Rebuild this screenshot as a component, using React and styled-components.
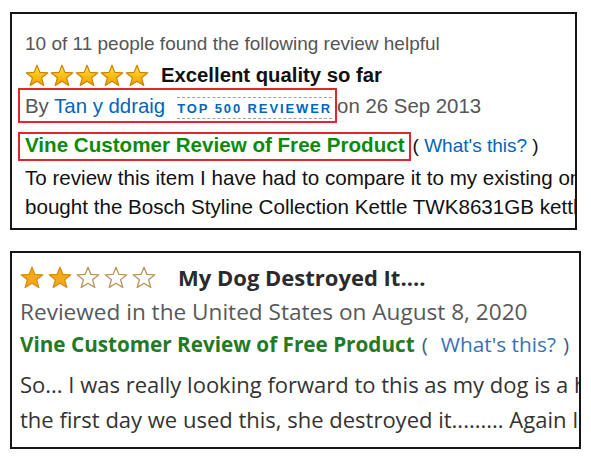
import React, { useId } from "react";
import styled, { createGlobalStyle } from "styled-components";

const GlobalStyle = createGlobalStyle`
  html, body { margin: 0; padding: 0; background: #fff; }
`;

const Page = styled.main`
  display: flex;
  flex-direction: column;
  align-items: flex-start;
  gap: 21px;
  padding: 12px 0 0 10px;
`;

const Panel = styled.section`
  box-sizing: border-box;
  width: ${(p) => p.$w}px;
  height: ${(p) => p.$h}px;
  border: 2px solid #151515;
  overflow: hidden;
  background: #fff;
`;

const ClassicContent = styled.div`
  padding: 19px 0 0 13px;
  font-family: "Liberation Sans", Arial, sans-serif;
  color: #111;
`;

const ModernContent = styled.div`
  padding: 11px 0 0 8px;
  font-family: "Open Sans", "Noto Sans", sans-serif;
  color: #333;
`;

const Helpful = styled.div`
  font-size: 19px;
  line-height: 22px;
  color: #555;
  white-space: nowrap;
`;

const TitleRow = styled.div`
  display: flex;
  align-items: center;
  gap: ${(p) => p.$gap}px;
  height: ${(p) => p.$h}px;
  margin-top: ${(p) => p.$mt || 0}px;
  white-space: nowrap;
`;

const StarList = styled.div`
  display: flex;
  gap: ${(p) => p.$gap}px;
  flex: none;
`;

const ReviewTitle = styled.h3`
  margin: 0;
  font-size: ${(p) => p.$size}px;
  font-weight: 700;
  color: ${(p) => p.$color};
  line-height: ${(p) => p.$lh}px;
`;

const MarkedRow = styled.div`
  display: flex;
  align-items: baseline;
  white-space: nowrap;
  margin-top: ${(p) => p.$mt || 0}px;
  font-size: ${(p) => p.$size || 20.4}px;
  line-height: ${(p) => p.$lh || "normal"};
`;

const RedBox = styled.div`
  border: 2px solid #e3262b;
  margin-left: -7px;
  padding: ${(p) => p.$pad};
  line-height: ${(p) => p.$lh}px;
`;

const Muted = styled.span`
  color: ${(p) => p.$color || "#555"};
`;

const Link = styled.span`
  color: ${(p) => p.$color || "#0066c0"};
  margin: 0 ${(p) => p.$mr || 0}px 0 ${(p) => p.$ml || 0}px;
`;

const Badge = styled.span`
  display: inline-block;
  margin-left: 12px;
  padding-top: 2px;
  border-top: 1px dashed #a0a0a0;
  border-bottom: 1px dashed #a0a0a0;
  font-size: 13px;
  font-weight: 700;
  letter-spacing: 1.9px;
  line-height: 18px;
  color: #0066c0;
`;

const VineLabel = styled.span`
  font-weight: 700;
  font-size: ${(p) => p.$size}px;
  color: ${(p) => p.$color};
`;

const Whats = styled.span`
  margin-left: ${(p) => p.$ml}px;
  font-size: ${(p) => p.$size}px;
  color: ${(p) => p.$color};
  white-space: pre;
`;

const Body = styled.div`
  margin-top: ${(p) => p.$mt}px;
  font-size: ${(p) => p.$size}px;
  line-height: ${(p) => p.$lh}px;
  color: ${(p) => p.$color};
`;

const BodyLine = styled.div`
  white-space: nowrap;
`;

const StatLine = styled.div`
  margin-top: 7px;
  font-size: 22.6px;
  line-height: 30px;
  color: #565959;
  white-space: nowrap;
`;

const STAR = "12,1.2 14.9,8.4 22.8,8.8 16.6,13.8 18.8,21.4 12,17.2 5.2,21.4 7.4,13.8 1.2,8.8 9.1,8.4";

function Star({ variant }) {
  const id = useId();
  if (variant === "classic") {
    return (
      <svg width="24" height="22" viewBox="0 0 24 22">
        <defs>
          <linearGradient id={id} x1="0" y1="0" x2="0" y2="1">
            <stop offset="0" stopColor="#ffe14d" />
            <stop offset="0.55" stopColor="#fbbd14" />
            <stop offset="1" stopColor="#f39c00" />
          </linearGradient>
        </defs>
        <polygon points={STAR} fill={`url(#${id})`} stroke="#c88500" strokeWidth="1.2" strokeLinejoin="round" />
      </svg>
    );
  }
  const filled = variant === "filled";
  return (
    <svg width="24" height="22" viewBox="0 0 24 22">
      <polygon
        points={STAR}
        fill={filled ? "#f6a81c" : "#ffffff"}
        stroke={filled ? "#d98c10" : "#b8965c"}
        strokeWidth="1.3"
        strokeLinejoin="round"
      />
    </svg>
  );
}

function Stars({ count, filled, classic, gap }) {
  return (
    <StarList $gap={gap}>
      {Array.from({ length: count }, (_, i) => (
        <Star key={i} variant={classic ? "classic" : i < filled ? "filled" : "empty"} />
      ))}
    </StarList>
  );
}

export default function App() {
  return (
    <>
      <GlobalStyle />
      <Page>
        <Panel $w={567} $h={218}>
          <ClassicContent>
            <Helpful>10 of 11 people found the following review helpful</Helpful>
            <TitleRow $gap={12} $h={24} $mt={8}>
              <Stars count={5} classic gap={1} />
              <ReviewTitle $size={20.3} $lh={24} $color="#111">Excellent quality so far</ReviewTitle>
            </TitleRow>
            <MarkedRow $mt={1}>
              <RedBox $pad="2px 3px 0 5px" $lh={29}>
                <Muted>By </Muted>
                <Link>Tan y ddraig</Link>
                <Badge>TOP 500 REVIEWER</Badge>
              </RedBox>
              <Muted>on 26 Sep 2013</Muted>
            </MarkedRow>
            <MarkedRow $mt={9}>
              <RedBox $pad="0 4px 3px 5px" $lh={22}>
                <VineLabel $size={20.6} $color="#0a8c0a">Vine Customer Review of Free Product</VineLabel>
              </RedBox>
              <Whats $ml={2} $size={19} $color="#111">
                {"( "}
                <Link>What's this?</Link>
                {" )"}
              </Whats>
            </MarkedRow>
            <Body $mt={2} $size={20.6} $lh={29.3} $color="#111">
              <BodyLine>To review this item I have had to compare it to my existing one which I had</BodyLine>
              <BodyLine>bought the Bosch Styline Collection Kettle TWK8631GB kettle from Amazon</BodyLine>
              <BodyLine>some years ago, so I'll often refer to that kettle for the comparison</BodyLine>
            </Body>
          </ClassicContent>
        </Panel>

        <Panel $w={571} $h={198}>
          <ModernContent>
            <TitleRow $gap={22} $h={26}>
              <Stars count={5} filled={2} gap={4} />
              <ReviewTitle $size={22} $lh={26} $color="#2b2b2b">My Dog Destroyed It....</ReviewTitle>
            </TitleRow>
            <StatLine>Reviewed in the United States on August 8, 2020</StatLine>
            <MarkedRow $mt={0} $size={20.8} $lh="34px">
              <VineLabel $size={20.7} $color="#247a24">
                Vine Customer Review of Free Product
              </VineLabel>
              <Whats $ml={7} $size={20.8} $color="#3d5f86">
                {"("}
                <Link $color="#3572b5" $ml={13} $mr={7}>What's this?</Link>
                {")"}
              </Whats>
            </MarkedRow>
            <Body $mt={6} $size={22} $lh={35} $color="#333">
              <BodyLine>So... I was really looking forward to this as my dog is a heavy chewer and</BodyLine>
              <BodyLine>the first day we used this, she destroyed it......... Again I have to say</BodyLine>
              <BodyLine>to myself that I felt it would last a bit longer than it did for us</BodyLine>
            </Body>
          </ModernContent>
        </Panel>
      </Page>
    </>
  );
}
